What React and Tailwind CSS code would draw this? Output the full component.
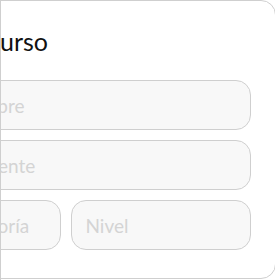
export default function App() {
  const font = { fontFamily: '"Lato", "Noto Sans", sans-serif' };
  const inputCls =
    "h-[50px] w-full rounded-[15px] border border-[#cfcfcf] bg-[#f8f8f8] pl-[14px] pr-4 text-[19px] text-[#333] placeholder:text-[#d4d4d4] outline-none";
  return (
    <div className="w-[275px] h-[280px] overflow-hidden bg-white border-l border-[#cfcfcf]" style={font}>
      <div className="ml-[-146px] w-[421px] h-[279px] rounded-[15px] border border-[#cfcfcf] bg-white px-6 pt-[22px]">
        <h2 className="h-[36px] text-[25px] leading-[36px] text-[#111] text-right pr-[203px]">Nuevo Curso</h2>
        <div className="mt-[21px] flex flex-col gap-[10px]">
          <input className={inputCls} placeholder="Ingrese nombre" />
          <input className={inputCls} placeholder="Nombre docente" />
          <div className="grid grid-cols-2 gap-[10px]">
            <input className={inputCls} placeholder="Elija la categoría" />
            <input className={inputCls} placeholder="Nivel" />
          </div>
        </div>
      </div>
    </div>
  );
}
